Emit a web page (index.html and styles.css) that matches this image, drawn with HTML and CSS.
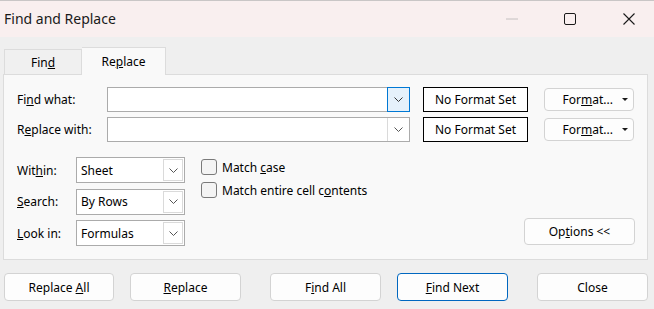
FILE: index.html
```html
<!DOCTYPE html>
<html>
<head>
<meta charset="utf-8">
<link rel="stylesheet" href="styles.css">
</head>
<body>
<div class="window">
  <div class="titlebar">
    <div class="title">Find and Replace</div>
    <div class="controls">
      <div class="ctl ctl-min"><svg width="12" height="2" viewBox="0 0 12 2"><line x1="0" y1="1" x2="12" y2="1" stroke="#c4c0c0" stroke-width="1"/></svg></div>
      <div class="ctl ctl-max"><svg width="12" height="12" viewBox="0 0 12 12"><rect x="0.5" y="0.5" width="11" height="11" rx="1.5" fill="none" stroke="#1a1a1a" stroke-width="1"/></svg></div>
      <div class="ctl ctl-close"><svg width="12" height="12" viewBox="0 0 12 12"><path d="M0.5 0.5 L11.5 11.5 M11.5 0.5 L0.5 11.5" stroke="#1a1a1a" stroke-width="1.1"/></svg></div>
    </div>
  </div>

  <div class="tabs">
    <div class="tab"><span>Fin<u>d</u></span></div>
    <div class="tab tab-active"><span>Re<u>p</u>lace</span></div>
  </div>

  <div class="panel">
    <div class="grid-top">
      <label class="lbl"><span>Fi<u>n</u>d what:</span></label>
      <div class="combo">
        <div class="combo-field"></div>
        <div class="combo-btn combo-btn-active"><svg width="9" height="5" viewBox="0 0 9 5"><path d="M0.5 0.5 L4.5 4.5 L8.5 0.5" fill="none" stroke="#333" stroke-width="1"/></svg></div>
      </div>
      <div class="nfs">No Format Set</div>
      <div class="fmt-btn"><span>For<u>m</u>at...</span><span class="caret"></span></div>

      <label class="lbl"><span>R<u>e</u>place with:</span></label>
      <div class="combo">
        <div class="combo-field"></div>
        <div class="combo-btn"><svg width="9" height="5" viewBox="0 0 9 5"><path d="M0.5 0.5 L4.5 4.5 L8.5 0.5" fill="none" stroke="#555" stroke-width="1"/></svg></div>
      </div>
      <div class="nfs">No Format Set</div>
      <div class="fmt-btn"><span>For<u>m</u>at...</span><span class="caret"></span></div>
    </div>

    <div class="lower">
      <div class="grid-opts">
        <label class="lbl"><span>Wit<u>h</u>in:</span></label>
        <div class="select"><span class="sel-text">Sheet</span><span class="sel-btn"><svg width="9" height="5" viewBox="0 0 9 5"><path d="M0.5 0.5 L4.5 4.5 L8.5 0.5" fill="none" stroke="#555" stroke-width="1"/></svg></span></div>
        <label class="lbl"><span><u>S</u>earch:</span></label>
        <div class="select"><span class="sel-text">By Rows</span><span class="sel-btn"><svg width="9" height="5" viewBox="0 0 9 5"><path d="M0.5 0.5 L4.5 4.5 L8.5 0.5" fill="none" stroke="#555" stroke-width="1"/></svg></span></div>
        <label class="lbl"><span><u>L</u>ook in:</span></label>
        <div class="select"><span class="sel-text">Formulas</span><span class="sel-btn"><svg width="9" height="5" viewBox="0 0 9 5"><path d="M0.5 0.5 L4.5 4.5 L8.5 0.5" fill="none" stroke="#555" stroke-width="1"/></svg></span></div>
      </div>
      <div class="checks">
        <div class="check"><span class="box"></span><span>Match <u>c</u>ase</span></div>
        <div class="check"><span class="box"></span><span>Match entire cell c<u>o</u>ntents</span></div>
      </div>
      <div class="opt-wrap">
        <div class="btn opt-btn"><span>Op<u>t</u>ions &lt;&lt;</span></div>
      </div>
    </div>
  </div>

  <div class="bottom">
    <div class="btn b1"><span>Replace <u>A</u>ll</span></div>
    <div class="btn b2"><span><u>R</u>eplace</span></div>
    <div class="btn b3"><span>F<u>i</u>nd All</span></div>
    <div class="btn b4 btn-default"><span><u>F</u>ind Next</span></div>
    <div class="btn b5"><span>Close</span></div>
  </div>
</div>
</body>
</html>
```
FILE: styles.css
```css
* { box-sizing: border-box; }
html, body { margin: 0; padding: 0; }
body {
  width: 654px;
  height: 309px;
  overflow: hidden;
  background: #efefef;
  font-family: "Noto Sans", "Open Sans", sans-serif;
  font-size: 12px;
  color: #000;
}
u { text-decoration: underline; text-underline-offset: 1px; text-decoration-thickness: 1px; }

.window { width: 654px; height: 309px; display: flex; flex-direction: column; }

.titlebar {
  height: 37px;
  background: #f9efef;
  border-top: 1px solid #c9c6c6;
  display: flex;
  align-items: center;
}
.title { font-size: 14px; padding-left: 4px; color: #1a1a1a; padding-bottom: 1px; }
.controls { margin-left: auto; display: flex; align-items: center; height: 100%; }
.ctl { height: 100%; display: flex; align-items: center; justify-content: center; }
.ctl-min { width: 58px; }
.ctl-max { width: 57px; }
.ctl-close { width: 56px; padding-left: 5px; }

.tabs {
  display: flex;
  align-items: flex-end;
  margin-top: 10px;
  padding-left: 4px;
  height: 27px;
}
.tab {
  width: 78px;
  height: 25px;
  border: 1px solid #dcdcdc;
  border-bottom: none;
  background: #f0f0f0;
  display: flex;
  align-items: center;
  justify-content: center;
  padding-top: 1px;
}
.tab-active {
  width: 84px;
  height: 28px;
  background: #f9f9f9;
  border-left: none;
  position: relative;
  margin-bottom: -1px;
  z-index: 1;
  padding-bottom: 2px;
}

.panel {
  margin-left: 3px;
  width: 645px;
  height: 186px;
  background: #f9f9f9;
  border: 1px solid #dcdcdc;
  padding: 12px 0 0 13px;
}

.grid-top {
  display: grid;
  grid-template-columns: 90px 303px 118px 106px;
  row-gap: 5px;
  grid-auto-rows: 25px;
}
.lbl { display: flex; align-items: center; white-space: nowrap; }
.combo {
  display: flex;
  border: 1px solid #ababab;
  background: #fff;
  height: 25px;
}
.combo-field { flex: 1; }
.combo-btn {
  width: 22px;
  display: flex;
  align-items: center;
  justify-content: center;
  border-left: 1px solid #dadada;
  background: #fff;
}
.combo-btn-active {
  border: 1px solid #0078d4;
  background: #e5f1fb;
  margin: -1px -1px -1px 0;
  width: 23px;
}
.nfs {
  margin-left: 13px;
  border: 1px solid #000;
  background: #fff;
  display: flex;
  align-items: center;
  justify-content: center;
  height: 25px;
}
.fmt-btn {
  margin-left: 16px;
  margin-top: 1px;
  height: 23px;
  border: 1px solid #d3d3d3;
  border-radius: 4px;
  background: #fdfdfd;
  display: flex;
  align-items: center;
  justify-content: flex-end;
  padding-right: 5px;
  gap: 9px;
}
.caret {
  width: 0; height: 0;
  border-left: 3px solid transparent;
  border-right: 3px solid transparent;
  border-top: 3px solid #1a1a1a;
}

.lower {
  margin-top: 15px;
  display: flex;
}
.grid-opts {
  display: grid;
  grid-template-columns: 59px 109px;
  grid-template-rows: 26px 26px 26px;
  row-gap: 5.5px;
}
.select {
  display: flex;
  border: 1px solid #ababab;
  background: #fff;
}
.sel-text { flex: 1; padding-left: 4px; display: flex; align-items: center; }
.sel-btn {
  width: 20px;
  margin: 1px;
  border: 1px solid #dadada;
  display: flex;
  align-items: center;
  justify-content: center;
}

.checks {
  margin-left: 16px;
  padding-top: 2px;
  display: flex;
  flex-direction: column;
  gap: 7px;
}
.check { display: flex; align-items: center; gap: 5px; height: 16px; }
.box {
  width: 16px; height: 16px;
  border: 1px solid #7a7a7a;
  border-radius: 3px;
  background: #f4f4f4;
}

.opt-wrap {
  margin-left: auto;
  margin-right: 12px;
  display: flex;
  align-items: flex-end;
}
.btn {
  height: 28px;
  border: 1px solid #d3d3d3;
  border-radius: 4px;
  background: #fdfdfd;
  display: flex;
  align-items: center;
  justify-content: center;
}
.opt-btn { width: 111px; height: 27px; margin-bottom: 1px; }

.bottom {
  display: flex;
  margin-top: 13px;
  padding-left: 4px;
}
.b1 { width: 110px; }
.b2 { width: 111px; margin-left: 16px; }
.b3 { width: 111px; margin-left: 29px; }
.b4 { width: 111px; margin-left: 16px; }
.b5 { width: 111px; margin-left: 29px; }
.btn-default { border-color: #0067c0; }
```
